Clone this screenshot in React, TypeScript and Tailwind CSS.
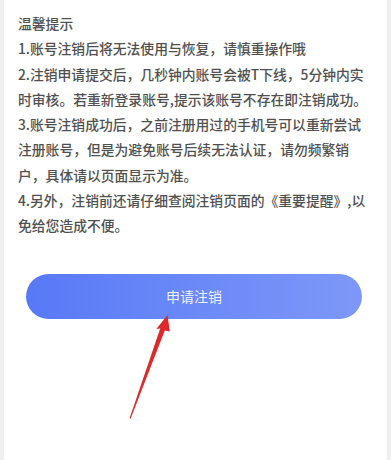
import React from "react";

const lines = [
  "温馨提示",
  "1.账号注销后将无法使用与恢复，请慎重操作哦",
  "2.注销申请提交后，几秒钟内账号会被T下线，5分钟内实",
  "时审核。若重新登录账号,提示该账号不存在即注销成功。",
  "3.账号注销成功后，之前注册用过的手机号可以重新尝试",
  "注册账号，但是为避免账号后续无法认证，请勿频繁销",
  "户，具体请以页面显示为准。",
  "4.另外，注销前还请仔细查阅注销页面的《重要提醒》,以",
  "免给您造成不便。",
];

export default function App() {
  return (
    <div
      className="relative w-[391px] h-[460px] overflow-hidden bg-[#efefef] pl-[4px] pr-[4px]"
      style={{ fontFamily: '"Noto Sans CJK SC", "Noto Sans", sans-serif' }}
    >
      <div className="h-full bg-white flex flex-col">
        <div className="pl-[14px] pt-[11px] text-[13.8px] leading-[25.3px] font-medium text-[#505050]">
          {lines.map((l, i) => (
            <div key={i} className="whitespace-nowrap">
              {l}
            </div>
          ))}
        </div>
        <div className="mt-[35px] pl-[22px]">
          <button className="w-[336px] h-[45px] rounded-full bg-gradient-to-r from-[#5879f6] to-[#7e98f8] text-[#eef1ff] text-[14px] flex items-center justify-center">
            申请注销
          </button>
        </div>
      </div>
      <svg
        className="absolute left-0 top-0 pointer-events-none"
        width="391"
        height="460"
        viewBox="0 0 391 460"
      >
        <polygon
          points="167.5,315 169.8,331.5 164.8,330.5 130.6,418.8 129.6,418.3 160.2,328.5 156.3,329"
          fill="#dc2a2c"
        />
      </svg>
    </div>
  );
}
